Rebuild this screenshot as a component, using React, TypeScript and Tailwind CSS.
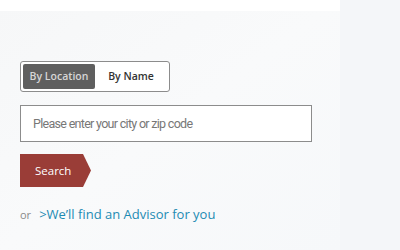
export default function App() {
  return (
    <div className="flex h-[250px] w-[400px] overflow-hidden font-['Open_Sans',sans-serif]">
      <div className="flex w-[340px] flex-col bg-gradient-to-br from-[#f6f7f8] via-[#f9fafb] to-[#f6f8fa]">
        {/* top white strip */}
        <div className="h-[11px] bg-white" />

        <div className="flex flex-col pl-[20px] pt-[50px]">
          {/* search mode toggle */}
          <div className="flex h-[31px] w-[150px] rounded-[3px] border border-[#8c8c8c] bg-white p-[2px]">
            <button className="flex w-[72px] items-center justify-center rounded-[2px] bg-[#5f5f5f] text-[10.5px] font-semibold text-[#d6d6d6]">
              By Location
            </button>
            <button className="flex flex-1 items-center justify-center text-[10.5px] font-semibold text-[#333]">
              By Name
            </button>
          </div>

          {/* city / zip input */}
          <input
            className="mt-[13px] h-[37px] w-[292px] border border-[#8c8c8c] bg-white pl-[12px] font-['Roboto',sans-serif] text-[12.5px] tracking-[-0.7px] text-[#333] outline-none placeholder:text-[#777]"
            placeholder="Please enter your city or zip code"
          />

          {/* search button with chevron edge */}
          <button className="mt-[12px] flex h-[33px] w-[71px] items-center bg-[#9a3d37] pl-[15px] text-[11.5px] text-white [clip-path:polygon(0_0,63px_0,71px_50%,63px_100%,0_100%)]">
            Search
          </button>

          <div className="mt-[18px] flex items-baseline">
            <span className="text-[11px] text-[#8a8a8a]">or</span>
            <a className="ml-[8px] text-[13px] text-[#1d8bb3]">&gt;We’ll find an Advisor for you</a>
          </div>
        </div>
      </div>

      <div className="flex-1 bg-[#f4f6f9]" />
    </div>
  );
}
